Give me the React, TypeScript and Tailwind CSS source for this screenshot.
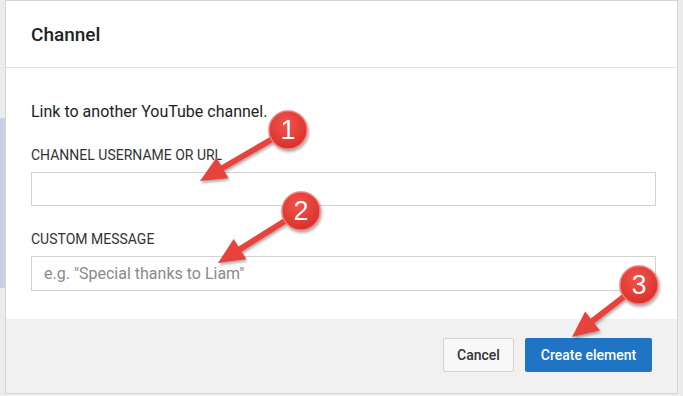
import React from "react";

type Callout = { n: string; cx: number; cy: number; tx: number; ty: number };

const CALLOUTS: Callout[] = [
  { n: "1", cx: 288, cy: 130, tx: 200, ty: 181 },
  { n: "2", cx: 301, cy: 211, tx: 218, ty: 263 },
  { n: "3", cx: 639, cy: 285, tx: 572, ty: 337 },
];

function headPoints(c: Callout) {
  const dx = c.tx - c.cx;
  const dy = c.ty - c.cy;
  const len = Math.hypot(dx, dy);
  const ux = dx / len;
  const uy = dy / len;
  const px = -uy;
  const py = ux;
  const bx = c.tx - 26 * ux;
  const by = c.ty - 26 * uy;
  const w = 12;
  return [
    `${c.tx},${c.ty}`,
    `${bx + w * px},${by + w * py}`,
    `${bx - w * px},${by - w * py}`,
  ].join(" ");
}

function Annotations() {
  return (
    <svg className="absolute inset-0 pointer-events-none" width={683} height={396}>
      <defs>
        <filter id="shadow" x="-30%" y="-30%" width="160%" height="160%">
          <feDropShadow dx="1" dy="2" stdDeviation="1.6" floodColor="#000" floodOpacity="0.35" />
        </filter>
        <radialGradient id="dot" cx="45%" cy="35%" r="65%">
          <stop offset="0%" stopColor="#f2554e" />
          <stop offset="100%" stopColor="#d9302b" />
        </radialGradient>
      </defs>
      {CALLOUTS.map((c) => {
        const dx = c.tx - c.cx;
        const dy = c.ty - c.cy;
        const len = Math.hypot(dx, dy);
        const ex = c.tx - (dx / len) * 20;
        const ey = c.ty - (dy / len) * 20;
        return (
          <g key={c.n} filter="url(#shadow)">
            <line x1={c.cx} y1={c.cy} x2={ex} y2={ey} stroke="#e8433d" strokeWidth={6} />
            <polygon points={headPoints(c)} fill="#e8433d" />
            <circle cx={c.cx} cy={c.cy} r={19} fill="url(#dot)" stroke="#f27a73" strokeWidth={1.5} />
            <text
              x={c.cx}
              y={c.cy + 9}
              textAnchor="middle"
              fill="#fff"
              fontSize={27}
              fontFamily="'Liberation Sans', Arial, sans-serif"
            >
              {c.n}
            </text>
          </g>
        );
      })}
    </svg>
  );
}

export default function App() {
  return (
    <div
      className="relative w-[683px] h-[396px] overflow-hidden bg-[#ececec] px-[5px] pb-[2px]"
      style={{ fontFamily: "Roboto, 'Liberation Sans', Arial, sans-serif" }}
    >
      {/* blurred page behind the dialog */}
      <div className="absolute left-0 top-[118px] w-[5px] h-[170px] bg-[#c8d1e6]" />

      <div className="relative flex flex-col h-full bg-white border border-[#d6d6d6]">
        {/* Header */}
        <div className="h-[67px] flex items-center px-[25px] pt-[3px] border-b border-[#e3e3e3]">
          <h2 className="text-[19px] font-medium text-[#222]">Channel</h2>
        </div>

        {/* Body */}
        <div className="flex flex-col px-[25px] pr-[21px] pt-[33px] pb-[28px]">
          <p className="text-[16px] leading-[21px] text-[#222]">Link to another YouTube channel.</p>

          <label className="mt-[25px] text-[14px] leading-[17px] text-[#333] uppercase">
            Channel username or URL
          </label>
          <input
            type="text"
            className="mt-[8px] h-[34px] w-full border border-[#d3d3d3] px-[12px] text-[16px] outline-none"
          />

          <label className="mt-[25px] text-[14px] leading-[17px] text-[#333] uppercase">
            Custom message
          </label>
          <input
            type="text"
            placeholder='e.g. "Special thanks to Liam"'
            className="mt-[8px] h-[35px] w-full border border-[#d3d3d3] px-[12px] text-[16px] outline-none placeholder:text-[#8a8a8a]"
          />
        </div>

        {/* Footer */}
        <div className="flex-1 flex justify-end items-start gap-[11px] bg-[#f1f1f1] pt-[19px] pr-[25px]">
          <button className="h-[34px] w-[71px] rounded-[2px] border border-[#d3d3d3] bg-[#f8f8f8] text-[14px] font-medium text-[#333]">
            Cancel
          </button>
          <button className="h-[34px] w-[127px] rounded-[2px] bg-[#1f74c6] text-[14px] font-medium text-white">
            Create element
          </button>
        </div>
      </div>

      <Annotations />
    </div>
  );
}
